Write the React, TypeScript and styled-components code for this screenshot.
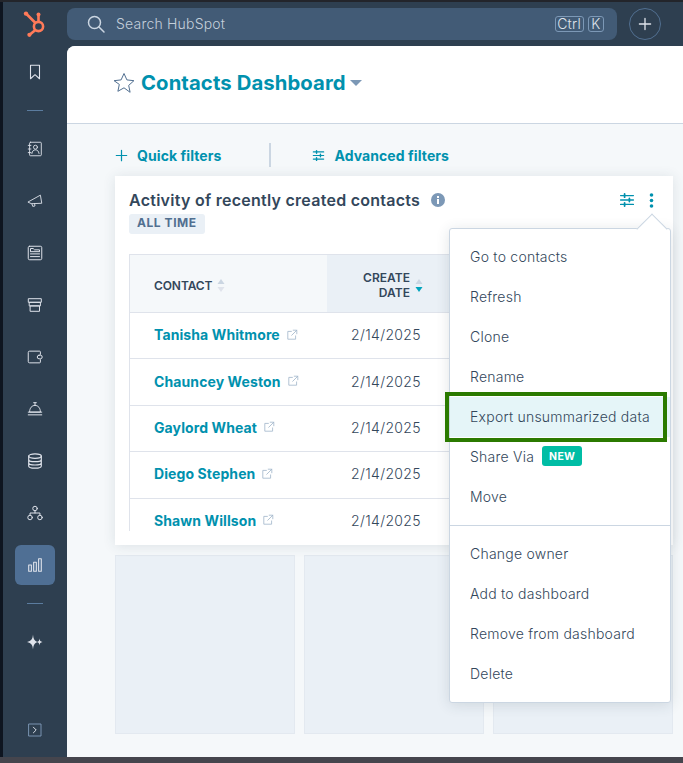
import React from "react";
import styled, { createGlobalStyle } from "styled-components";

const Global = createGlobalStyle`
  html, body { margin: 0; padding: 0; height: 100%; background: #2e3f50; }
  #root { height: 100%; }
  * { box-sizing: border-box; }
  body { font-family: Inter, "Open Sans", sans-serif; color: #33475b; }
`;

const Page = styled.div`
  width: 683px; height: 763px; overflow: hidden; position: relative;
  display: flex; flex-direction: column; background: #2e3f50;
`;
const TopEdge = styled.div`height: 2px; flex: none; background: #23252b;`;
const BottomEdge = styled.div`height: 6px; flex: none; background: #45454d;`;
const Shell = styled.div`flex: 1; min-height: 0; display: flex;`;
const LeftEdge = styled.div`width: 3px; flex: none; background: #0e1520;`;

const Sidebar = styled.nav`
  width: 64px; flex: none; display: flex; flex-direction: column; align-items: center;
`;
const LogoSlot = styled.div`height: 44px; flex: none; display: flex; align-items: center; justify-content: center; color: #ff7a59;`;
const Slot = styled.div<{ $active?: boolean }>`
  width: 40px; height: 52px; flex: none; display: flex; align-items: center; justify-content: center; color: #dfe3eb;
  ${p => p.$active ? `position: relative; z-index: 0; &::before { content: ""; position: absolute; z-index: -1; left: 0; right: 0; top: 6px; bottom: 6px; border-radius: 6px; background: #4f6f94; }` : ""}
`;
const Rule = styled.div`width: 16px; height: 1px; flex: none; margin: 12px 0; background: #5b7c9f;`;
const Spacer = styled.div`flex: 1;`;
const FootSlot = styled.div`height: 35px; flex: none; display: flex; align-items: flex-start; justify-content: center; color: #7c98b6;`;

const Main = styled.div`flex: 1; min-width: 0; display: flex; flex-direction: column;`;
const TopNav = styled.header`height: 44px; flex: none; display: flex; align-items: center; gap: 12px;`;
const SearchBar = styled.div`
  width: 550px; height: 32px; border-radius: 8px; background: #425b76; display: flex; align-items: center;
  padding: 0 13px 0 19px; color: #cbd6e2;
`;
const SearchText = styled.span`margin: 0 0 2px 10px; flex: 1; font-size: 14px; font-weight: 300; letter-spacing: .2px; color: #c4cfdb;`;
const Kbd = styled.kbd`
  font-family: inherit; font-size: 14px; font-weight: 300; line-height: 14px; height: 16px; padding: 0 1.5px; margin-left: 4px;
  border: 1px solid #7c98b6; border-radius: 3px; color: #dfe3eb; display: flex; align-items: center; letter-spacing: .3px;
`;
const KbdKey = styled(Kbd)`padding: 0 2.5px;`;
const CircleButton = styled.div`
  width: 32px; height: 32px; border-radius: 50%; border: 1px solid #516f90; display: flex; align-items: center; justify-content: center; color: #dfe3eb;
`;

const Content = styled.main`flex: 1; min-height: 0; background: #f5f8fa; border-top-left-radius: 8px; overflow: hidden; display: flex; flex-direction: column;`;
const PageHead = styled.div`
  height: 78px; flex: none; background: #fff; border-bottom: 1px solid #cbd6e2; display: flex; align-items: center; padding: 0 0 4px 45px;
`;
const PageTitle = styled.h1`
  margin: 0 0 0 5px; font-size: 20.3px; font-weight: 700; color: #0091ae; letter-spacing: .1px; line-height: 28px;
`;
const Caret = styled.span`
  margin: 0 0 0 4px; width: 0; height: 0; border-left: 6px solid transparent; border-right: 6px solid transparent; border-top: 6px solid #7c98b6;
`;
const Body = styled.div`flex: 1; min-height: 0; padding: 0 10px 0 48px; display: flex; flex-direction: column;`;
const FilterRow = styled.div`height: 52px; flex: none; display: flex; align-items: center; color: #0091ae; padding-top: 18px; padding-bottom: 8px;`;
const FilterButton = styled.div`display: flex; align-items: center; gap: 9px; font-size: 14px; font-weight: 700; letter-spacing: .08px;`;
const FilterRule = styled.div`width: 2px; height: 24px; background: #cbd6e2; margin: 0 41px 0 48px;`;

const Card = styled.section`
  height: 369px; flex: none; background: #fff; box-shadow: 0 1px 12px rgba(45,62,80,.12); padding: 14px 0 0 14px; position: relative; overflow: hidden;
`;
const CardHead = styled.div`display: flex; align-items: center; height: 20px; padding-right: 19px;`;
const CardTitle = styled.h2`margin: 0; font-size: 16px; font-weight: 600; color: #33475b; letter-spacing: .26px; white-space: nowrap;`;
const InfoWrap = styled.span`margin-left: 11px; display: flex; color: #7c98b6;`;
const CardActions = styled.div`margin-left: auto; display: flex; align-items: center; gap: 14px; color: #0091ae;`;
const Tag = styled.span`
  display: inline-block; margin-top: 4px; height: 20px; line-height: 18px; padding: 0 8px; background: #eaf0f6; border-radius: 3px;
  font-size: 12px; font-weight: 700; color: #516f90; letter-spacing: .55px;
`;
const TableClip = styled.div`margin-top: 20px; width: 530px; height: 277px; overflow: hidden; border-left: 1px solid #dfe3eb;`;
const Table = styled.div`width: 100%;`;
const HeadRow = styled.div`display: grid; grid-template-columns: 197px 1fr; height: 59px; border: solid #dfe3eb; border-width: 1px 0; background: #f5f8fa;`;
const HeadCell = styled.div<{ $sorted?: boolean }>`
  display: flex; align-items: center; font-size: 12px; font-weight: 600; color: #33475b; line-height: 15px; padding-top: 3px;
  ${p => p.$sorted ? `background: #eaf0f6; padding-left: 36px; text-align: right; letter-spacing: .05px;` : `padding-left: 24px; letter-spacing: -.1px;`}
`;
const SortIcon = styled.span`margin-left: 5px; display: flex; align-self: center;`;
const Row = styled.div`display: grid; grid-template-columns: 197px 1fr; height: 46.4px; border-bottom: 1px solid #dfe3eb; align-items: center; padding-bottom: 2px;`;
const NameCell = styled.div`padding-left: 24px; display: flex; align-items: center; gap: 6px; font-size: 14px; font-weight: 700; color: #0091ae; letter-spacing: .1px; white-space: nowrap;`;
const ExtWrap = styled.span`display: flex; color: #a3b7cc;`;
const DateCell = styled.div`padding-left: 24px; font-size: 14px; font-weight: 300; color: #33475b; letter-spacing: .35px;`;

const Placeholders = styled.div`flex: none; display: grid; grid-template-columns: repeat(3, 180px); gap: 9px; margin-top: 10px;`;
const Placeholder = styled.div`height: 179px; background: #eaf0f6; border: 1px solid #e3e9f0;`;

const Menu = styled.div`
  position: absolute; left: 449px; top: 228px; width: 222px; background: #fff; border: 1px solid #cbd6e2; border-radius: 3px;
  padding: 8px 0; box-shadow: 0 2px 14px rgba(45,62,80,.14); z-index: 5;
`;
const MenuArrow = styled.div`
  position: absolute; right: 7.5px; top: -11.5px; width: 22px; height: 22px; background: #fff; border: solid #cbd6e2; border-width: 1px 0 0 1px; transform: rotate(45deg); z-index: 6;
`;
const MenuItem = styled.div<{ $on?: boolean }>`
  position: relative; z-index: 7; height: 40px; display: flex; align-items: center; padding: 0 0 2px 20px; font-size: 14px; font-weight: 300; letter-spacing: .23px; color: #33475b;
  background: ${p => p.$on ? "#e5f5f8" : "transparent"};
`;
const NewBadge = styled.span`
  margin-left: 8px; height: 20px; padding: 0 7px; border-radius: 3px; background: #00bda5; color: #fff; font-size: 10.5px; font-weight: 700; letter-spacing: .3px; display: flex; align-items: center;
`;
const MenuRule = styled.div`height: 1px; margin: 8px 0; background: #cbd6e2;`;
const Callout = styled.div`
  position: absolute; left: 445px; top: 392px; width: 222px; height: 50px; border: 4px solid #2b7a00; z-index: 8; pointer-events: none;
`;

const Ic = ({ s = 20, children, fill = "none", sw = 1.2 }: { s?: number; children: React.ReactNode; fill?: string; sw?: number }) => (
  <svg width={s} height={s} viewBox="0 0 20 20" fill={fill} stroke={fill === "none" ? "currentColor" : "none"} strokeWidth={sw} strokeLinecap="round" strokeLinejoin="round">{children}</svg>
);

const Logo = () => (
  <svg width="24" height="26" viewBox="0 0 24 26" fill="none" stroke="currentColor" strokeWidth="2.6" strokeLinecap="round">
    <circle cx="15.5" cy="15.5" r="4.6" />
    <path d="M15.5 10.5V5M4 3.5l8 8M11.8 19.5l-4.6 3.8" />
    <circle cx="15.5" cy="3.4" r="2" fill="currentColor" stroke="none" />
    <circle cx="3" cy="2.6" r="2.2" fill="currentColor" stroke="none" />
    <circle cx="6.4" cy="23.8" r="2.1" fill="currentColor" stroke="none" />
  </svg>
);
const Sliders = ({ s = 16 }: { s?: number }) => (
  <Ic s={s} sw={1.7}>
    <path d="M2 4.500h16M2 10h16M2 15.500h16" />
    <path d="M7 2.500v4M13 8v4M7 13.500v4" strokeWidth="2.2" />
  </Ic>
);
const Plus = ({ s = 14 }: { s?: number }) => (
  <Ic s={s} sw={1.9}><path d="M10 2v16M2 10h16" /></Ic>
);
const Ext = () => (
  <Ic s={12} sw={1.4}>
    <path d="M16 11.500V17H3V4h6" /><path d="M12 2h6v6M18 2l-8.500 8.500" />
  </Ic>
);
const Sort = ({ active }: { active?: boolean }) => (
  <svg width="8" height="15" viewBox="0 0 8 15"><path d="M4 1l3.500 5h-7z" fill="#cbd6e2" /><path d="M4 14l3.500-5h-7z" fill={active ? "#00a4bd" : "#dfe3eb"} /></svg>
);

const names = ["Tanisha Whitmore", "Chauncey Weston", "Gaylord Wheat", "Diego Stephen", "Shawn Willson"];
const first = ["Go to contacts", "Refresh", "Clone", "Rename"];
const last = ["Change owner", "Add to dashboard", "Remove from dashboard", "Delete"];

export default function App() {
  return (
    <Page>
      <Global />
      <TopEdge />
      <Shell>
        <LeftEdge />
        <Sidebar>
          <LogoSlot><Logo /></LogoSlot>
          <Slot><Ic s={18}><path d="M5 2.500h10v15l-5-4.500-5 4.500z" /></Ic></Slot>
          <Rule />
          <Slot><Ic s={18} sw={1}><rect x="4" y="2.500" width="13" height="15" rx="1" /><circle cx="10.500" cy="8" r="2.200" /><path d="M6.500 15c.5-3 2-4 4-4s3.500 1 4 4M2.500 6h3M2.500 10h3M2.500 14h3" /></Ic></Slot>
          <Slot><Ic s={18} sw={1}><path d="M2.500 11L16 3.500l1.500 9-11 .5z" /><path d="M6.500 13l1 3 2.500-.5-.5-2.500" /></Ic></Slot>
          <Slot><Ic s={18} sw={1.1}><rect x="2.500" y="2.500" width="15" height="15" rx="1.500" /><path d="M5 8V5h3l1.500 1.500H15V8M5 11h10M5 14h10M5 8.500h10" /></Ic></Slot>
          <Slot><Ic s={18} sw={1.1}><path d="M3 3h14v4H3zM4 7h12v4H4zM5 11h10v6H5z" /></Ic></Slot>
          <Slot><Ic s={18} sw={1.1}><path d="M16 7V4.500a1 1 0 0 0-1-1H4a1.500 1.500 0 0 0-1.500 1.500v10A1.500 1.500 0 0 0 4 16.500h11a1 1 0 0 0 1-1V13" /><rect x="12.500" y="8" width="5.500" height="4" rx="2" /></Ic></Slot>
          <Slot><Ic s={18} sw={1.1}><path d="M10 3v2.500M8.500 3h3M4 13c0-4 2.500-7 6-7s6 3 6 7zM2.500 16.500h15" /><path d="M2.500 13.500h15" /></Ic></Slot>
          <Slot><Ic s={18} sw={1.3}><ellipse cx="10" cy="4.500" rx="7" ry="2.500" /><path d="M3 4.500v11c0 1.400 3.100 2.500 7 2.500s7-1.100 7-2.500v-11M3 8.200c0 1.400 3.100 2.500 7 2.500s7-1.100 7-2.500M3 11.900c0 1.400 3.100 2.500 7 2.500s7-1.100 7-2.500" /></Ic></Slot>
          <Slot><Ic s={18} sw={1.1}><circle cx="10" cy="5" r="2.500" /><circle cx="4.500" cy="15" r="2.500" /><circle cx="15.500" cy="15" r="2.500" /><path d="M10 7.500V10M4.500 12.500V10h11v2.500" /></Ic></Slot>
          <Slot $active><Ic s={18} sw={1.2}><rect x="3" y="10" width="3" height="7" /><rect x="8.500" y="7" width="3" height="10" /><rect x="14" y="3" width="3" height="14" /></Ic></Slot>
          <Rule />
          <Slot><Ic s={20} fill="currentColor"><path d="M8 2.500c.4 4.500 1.500 6.500 4.500 7.500-3 1-4.100 3-4.500 7.500-.4-4.500-1.500-6.500-6-7.500 4.500-1 5.600-3 6-7.500z" /><path d="M14.500 6.500c.3 2.200.9 3 3 3.500-2.100.5-2.700 1.300-3 3.500-.3-2.200-.9-3-2.500-3.500 1.600-.5 2.200-1.300 2.500-3.500z" /></Ic></Slot>
          <Spacer />
          <FootSlot><Ic s={16}><path d="M2.500 2.500h15v15h-15z" /><path d="M8 6.500l3.500 3.500L8 13.500" stroke="#dfe3eb" /></Ic></FootSlot>
        </Sidebar>
        <Main>
          <TopNav>
            <SearchBar>
              <Ic s={20} sw={1.5}><circle cx="8.500" cy="8.500" r="6" /><path d="M13 13l5 5" /></Ic>
              <SearchText>Search HubSpot</SearchText>
              <Kbd>Ctrl</Kbd>
              <KbdKey>K</KbdKey>
            </SearchBar>
            <CircleButton><Plus s={14} /></CircleButton>
          </TopNav>
          <Content>
            <PageHead>
              <svg width="24" height="24" viewBox="0 0 24 24" fill="none" stroke="#516f90" strokeWidth="1"><path d="M12 2.500l2.900 6.400 7 .8-5.200 4.700 1.400 6.900L12 16.800 5.900 20.300l1.400-6.900L2.100 9.700l7-.8z" strokeLinejoin="round" /></svg>
              <PageTitle>Contacts Dashboard</PageTitle>
              <Caret />
            </PageHead>
            <Body>
              <FilterRow>
                <FilterButton><Plus s={13} />Quick filters</FilterButton>
                <FilterRule />
                <FilterButton><Sliders s={13} />Advanced filters</FilterButton>
              </FilterRow>
              <Card>
                <CardHead>
                  <CardTitle>Activity of recently created contacts</CardTitle>
                  <InfoWrap>
                    <svg width="14" height="14" viewBox="0 0 14 14"><circle cx="7" cy="7" r="7" fill="currentColor" /><rect x="6" y="6" width="2" height="5" fill="#fff" /><rect x="6" y="3" width="2" height="2" fill="#fff" /></svg>
                  </InfoWrap>
                  <CardActions>
                    <Sliders s={16} />
                    <svg width="5" height="15" viewBox="0 0 5 15" fill="currentColor"><circle cx="2.500" cy="2" r="1.800" /><circle cx="2.500" cy="7.500" r="1.800" /><circle cx="2.500" cy="13" r="1.800" /></svg>
                  </CardActions>
                </CardHead>
                <Tag>ALL TIME</Tag>
                <TableClip>
                  <Table>
                    <HeadRow>
                      <HeadCell>CONTACT<SortIcon><Sort /></SortIcon></HeadCell>
                      <HeadCell $sorted>CREATE<br />DATE<SortIcon><Sort active /></SortIcon></HeadCell>
                    </HeadRow>
                    {names.map(n => (
                      <Row key={n}>
                        <NameCell>{n}<ExtWrap><Ext /></ExtWrap></NameCell>
                        <DateCell>2/14/2025</DateCell>
                      </Row>
                    ))}
                  </Table>
                </TableClip>
              </Card>
              <Placeholders>
                <Placeholder /><Placeholder /><Placeholder />
              </Placeholders>
            </Body>
          </Content>
        </Main>
      </Shell>
      <BottomEdge />
      <Menu>
        <MenuArrow />
        {first.map(t => <MenuItem key={t}>{t}</MenuItem>)}
        <MenuItem $on>Export unsummarized data</MenuItem>
        <MenuItem>Share Via<NewBadge>NEW</NewBadge></MenuItem>
        <MenuItem>Move</MenuItem>
        <MenuRule />
        {last.map(t => <MenuItem key={t}>{t}</MenuItem>)}
      </Menu>
      <Callout />
    </Page>
  );
}
